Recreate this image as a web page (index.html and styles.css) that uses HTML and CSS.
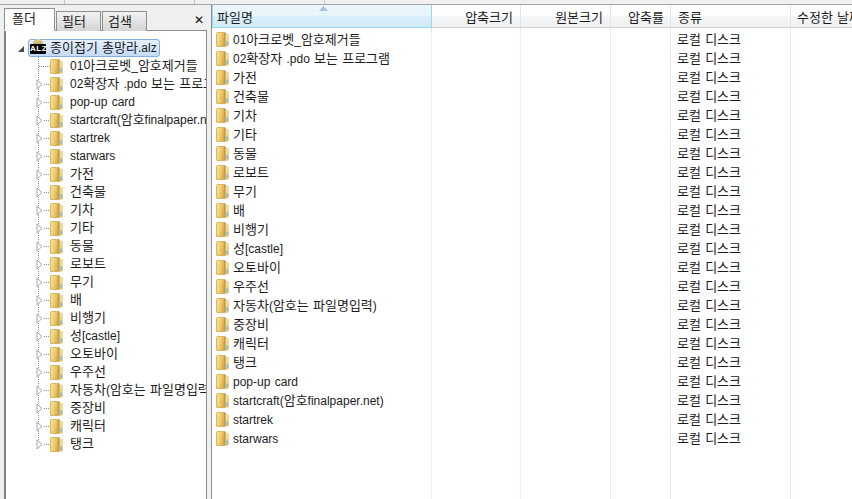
FILE: index.html
```html
<!DOCTYPE html>
<html lang="ko">
<head>
<meta charset="utf-8">
<title>ALZ</title>
<link rel="stylesheet" href="styles.css">
</head>
<body>
<svg class="defs" width="0" height="0" aria-hidden="true">
  <defs>
    <linearGradient id="ff" x1="0" y1="0" x2="1" y2="0.3"><stop offset="0" stop-color="#f8e49c"/><stop offset="0.55" stop-color="#f0cf72"/><stop offset="1" stop-color="#d9ac48"/></linearGradient>
    <linearGradient id="fr" x1="0" y1="0" x2="0" y2="1"><stop offset="0" stop-color="#f6e29c"/><stop offset="1" stop-color="#ebcc78"/></linearGradient>
    <symbol id="folder" viewBox="0 0 13 15">
      <path d="M0.5 1.5 Q0.5 0.5 1.5 0.5 L8.5 0.5 L8.5 14.5 L1 14.5 Q0.5 14.5 0.5 14 Z" fill="url(#ff)" stroke="#cfa950" stroke-width="0.8"/>
      <path d="M8.5 0.5 L9.7 0.5 L9.7 14.5 L8.5 14.5 Z" fill="#a98438"/>
      <path d="M9.7 2 L12.5 2.5 L12.5 14 L9.7 14.5 Z" fill="url(#fr)" stroke="#d6b35c" stroke-width="0.4"/>
      <path d="M10.6 9.5 h1.4 v3.5 h-1.4 Z" fill="#79b4dc"/>
    </symbol>
    <symbol id="twist" viewBox="0 0 7 11">
      <path d="M1 1 L6 5.5 L1 10 Z" fill="#fff" stroke="#a6a6a6"/>
    </symbol>
  </defs>
</svg>
<div class="topstrip"><i class="tick t1"></i><i class="tick t2"></i><i class="tick t3"></i></div>
<div class="main">
  <aside class="left">
    <div class="tabs">
      <div class="tab on">폴더</div>
      <div class="tab">필터</div>
      <div class="tab">검색</div>
      <div class="close">✕</div>
    </div>
    <div class="tree">
      <div class="root">
        <svg class="rootarrow" width="6" height="6" viewBox="0 0 6 6"><path d="M6 0 V6 H0 Z" fill="#4a4a4a"/></svg>
        <div class="sel">
          <span class="alz"><i class="bulb"></i><b class="alzt">ALZ</b></span>
          <span class="name">종이접기 총망라<span class="lat">.alz</span></span>
        </div>
      </div>
      <div class="nodes">
        <div class="node first"><span class="tw"></span><span class="dots"></span><svg class="ic"><use href="#folder"/></svg><span class="name"><span class="lat">01</span>아크로벳<span class="lat">_</span>암호제거들</span></div>
        <div class="node"><span class="tw"><svg class="arr"><use href="#twist"/></svg></span><span class="dots"></span><svg class="ic"><use href="#folder"/></svg><span class="name"><span class="lat">02</span>확장자 <span class="lat">.pdo</span> 보는 프로그램</span></div>
        <div class="node"><span class="tw"><svg class="arr"><use href="#twist"/></svg></span><span class="dots"></span><svg class="ic"><use href="#folder"/></svg><span class="name lat">pop-up card</span></div>
        <div class="node"><span class="tw"><svg class="arr"><use href="#twist"/></svg></span><span class="dots"></span><svg class="ic"><use href="#folder"/></svg><span class="name"><span class="lat">startcraft(</span>암호<span class="lat">finalpaper.net)</span></span></div>
        <div class="node"><span class="tw"><svg class="arr"><use href="#twist"/></svg></span><span class="dots"></span><svg class="ic"><use href="#folder"/></svg><span class="name lat">startrek</span></div>
        <div class="node"><span class="tw"><svg class="arr"><use href="#twist"/></svg></span><span class="dots"></span><svg class="ic"><use href="#folder"/></svg><span class="name lat">starwars</span></div>
        <div class="node"><span class="tw"><svg class="arr"><use href="#twist"/></svg></span><span class="dots"></span><svg class="ic"><use href="#folder"/></svg><span class="name">가전</span></div>
        <div class="node"><span class="tw"><svg class="arr"><use href="#twist"/></svg></span><span class="dots"></span><svg class="ic"><use href="#folder"/></svg><span class="name">건축물</span></div>
        <div class="node"><span class="tw"><svg class="arr"><use href="#twist"/></svg></span><span class="dots"></span><svg class="ic"><use href="#folder"/></svg><span class="name">기차</span></div>
        <div class="node"><span class="tw"><svg class="arr"><use href="#twist"/></svg></span><span class="dots"></span><svg class="ic"><use href="#folder"/></svg><span class="name">기타</span></div>
        <div class="node"><span class="tw"><svg class="arr"><use href="#twist"/></svg></span><span class="dots"></span><svg class="ic"><use href="#folder"/></svg><span class="name">동물</span></div>
        <div class="node"><span class="tw"><svg class="arr"><use href="#twist"/></svg></span><span class="dots"></span><svg class="ic"><use href="#folder"/></svg><span class="name">로보트</span></div>
        <div class="node"><span class="tw"><svg class="arr"><use href="#twist"/></svg></span><span class="dots"></span><svg class="ic"><use href="#folder"/></svg><span class="name">무기</span></div>
        <div class="node"><span class="tw"><svg class="arr"><use href="#twist"/></svg></span><span class="dots"></span><svg class="ic"><use href="#folder"/></svg><span class="name">배</span></div>
        <div class="node"><span class="tw"><svg class="arr"><use href="#twist"/></svg></span><span class="dots"></span><svg class="ic"><use href="#folder"/></svg><span class="name">비행기</span></div>
        <div class="node"><span class="tw"><svg class="arr"><use href="#twist"/></svg></span><span class="dots"></span><svg class="ic"><use href="#folder"/></svg><span class="name">성<span class="lat">[castle]</span></span></div>
        <div class="node"><span class="tw"><svg class="arr"><use href="#twist"/></svg></span><span class="dots"></span><svg class="ic"><use href="#folder"/></svg><span class="name">오토바이</span></div>
        <div class="node"><span class="tw"><svg class="arr"><use href="#twist"/></svg></span><span class="dots"></span><svg class="ic"><use href="#folder"/></svg><span class="name">우주선</span></div>
        <div class="node"><span class="tw"><svg class="arr"><use href="#twist"/></svg></span><span class="dots"></span><svg class="ic"><use href="#folder"/></svg><span class="name">자동차<span class="lat">(</span>암호는 파일명입력<span class="lat">)</span></span></div>
        <div class="node"><span class="tw"><svg class="arr"><use href="#twist"/></svg></span><span class="dots"></span><svg class="ic"><use href="#folder"/></svg><span class="name">중장비</span></div>
        <div class="node"><span class="tw"><svg class="arr"><use href="#twist"/></svg></span><span class="dots"></span><svg class="ic"><use href="#folder"/></svg><span class="name">캐릭터</span></div>
        <div class="node last"><span class="tw"><svg class="arr"><use href="#twist"/></svg></span><span class="dots"></span><svg class="ic"><use href="#folder"/></svg><span class="name">탱크</span></div>
      </div>
    </div>
  </aside>
  <section class="right">
    <div class="cols head">
      <div class="hc c1 active"><svg class="sort" width="9" height="5" viewBox="0 0 9 5"><path d="M4.5 0 L9 5 H0 Z" fill="#a9c4d8"/></svg>파일명</div>
      <div class="hc c2 num">압축크기</div>
      <div class="hc c3 num">원본크기</div>
      <div class="hc c4 num">압축률</div>
      <div class="hc c5">종류</div>
      <div class="hc c6">수정한 날짜</div>
    </div>
    <div class="body">
      <div class="guides"><i class="c1"></i><i class="c2"></i><i class="c3"></i><i class="c4"></i><i class="c5"></i></div>
      <div class="rows">
        <div class="row"><span class="fname"><svg class="ic"><use href="#folder"/></svg><span><span class="lat">01</span>아크로벳<span class="lat">_</span>암호제거들</span></span><span class="kind">로컬 디스크</span></div>
        <div class="row"><span class="fname"><svg class="ic"><use href="#folder"/></svg><span><span class="lat">02</span>확장자 <span class="lat">.pdo</span> 보는 프로그램</span></span><span class="kind">로컬 디스크</span></div>
        <div class="row"><span class="fname"><svg class="ic"><use href="#folder"/></svg>가전</span><span class="kind">로컬 디스크</span></div>
        <div class="row"><span class="fname"><svg class="ic"><use href="#folder"/></svg>건축물</span><span class="kind">로컬 디스크</span></div>
        <div class="row"><span class="fname"><svg class="ic"><use href="#folder"/></svg>기차</span><span class="kind">로컬 디스크</span></div>
        <div class="row"><span class="fname"><svg class="ic"><use href="#folder"/></svg>기타</span><span class="kind">로컬 디스크</span></div>
        <div class="row"><span class="fname"><svg class="ic"><use href="#folder"/></svg>동물</span><span class="kind">로컬 디스크</span></div>
        <div class="row"><span class="fname"><svg class="ic"><use href="#folder"/></svg>로보트</span><span class="kind">로컬 디스크</span></div>
        <div class="row"><span class="fname"><svg class="ic"><use href="#folder"/></svg>무기</span><span class="kind">로컬 디스크</span></div>
        <div class="row"><span class="fname"><svg class="ic"><use href="#folder"/></svg>배</span><span class="kind">로컬 디스크</span></div>
        <div class="row"><span class="fname"><svg class="ic"><use href="#folder"/></svg>비행기</span><span class="kind">로컬 디스크</span></div>
        <div class="row"><span class="fname"><svg class="ic"><use href="#folder"/></svg><span>성<span class="lat">[castle]</span></span></span><span class="kind">로컬 디스크</span></div>
        <div class="row"><span class="fname"><svg class="ic"><use href="#folder"/></svg>오토바이</span><span class="kind">로컬 디스크</span></div>
        <div class="row"><span class="fname"><svg class="ic"><use href="#folder"/></svg>우주선</span><span class="kind">로컬 디스크</span></div>
        <div class="row"><span class="fname"><svg class="ic"><use href="#folder"/></svg><span>자동차<span class="lat">(</span>암호는 파일명입력<span class="lat">)</span></span></span><span class="kind">로컬 디스크</span></div>
        <div class="row"><span class="fname"><svg class="ic"><use href="#folder"/></svg>중장비</span><span class="kind">로컬 디스크</span></div>
        <div class="row"><span class="fname"><svg class="ic"><use href="#folder"/></svg>캐릭터</span><span class="kind">로컬 디스크</span></div>
        <div class="row"><span class="fname"><svg class="ic"><use href="#folder"/></svg>탱크</span><span class="kind">로컬 디스크</span></div>
        <div class="row"><span class="fname"><svg class="ic"><use href="#folder"/></svg><span class="lat">pop-up card</span></span><span class="kind">로컬 디스크</span></div>
        <div class="row"><span class="fname"><svg class="ic"><use href="#folder"/></svg><span><span class="lat">startcraft(</span>암호<span class="lat">finalpaper.net)</span></span></span><span class="kind">로컬 디스크</span></div>
        <div class="row"><span class="fname"><svg class="ic"><use href="#folder"/></svg><span class="lat">startrek</span></span><span class="kind">로컬 디스크</span></div>
        <div class="row"><span class="fname"><svg class="ic"><use href="#folder"/></svg><span class="lat">starwars</span></span><span class="kind">로컬 디스크</span></div>
      </div>
    </div>
  </section>
</div>
</body>
</html>
```
FILE: styles.css
```css
* { box-sizing: border-box; }
html, body { margin: 0; padding: 0; width: 852px; height: 499px; overflow: hidden; }
body {
  display: flex; flex-direction: column;
  background: #f0f0f0;
  font-family: Roboto, "Noto Sans CJK KR", sans-serif;
  font-size: 13px;
  line-height: 18px;
  word-spacing: 1px;
  color: #1c1c1c;
}
.lat { font-family: "Liberation Sans", sans-serif; font-size: 12px; }
.defs { position: absolute; }

.topstrip { height: 5px; flex: none; position: relative; background: #f0f0f0; border-bottom: 1px solid #a5a5ae; }
.tick { position: absolute; top: 0; width: 1px; height: 4px; background: #c4c4c4; }
.t1 { left: 64px; } .t2 { left: 194px; } .t3 { left: 324px; }

.main { flex: 1; display: flex; min-height: 0; }

/* left pane */
.left { width: 207px; flex: none; padding: 3px 0 0 4px; display: flex; flex-direction: column; }
.tabs { display: flex; height: 23px; flex: none; align-items: flex-end; position: relative; z-index: 1; margin-bottom: -1px; }
.tab {
  width: 45px; height: 20px; margin-left: 1px; padding-left: 5px;
  border: 1px solid #8e8f8f; border-bottom: none;
  background: linear-gradient(#f2f2f2, #d4d4d4);
  line-height: 20px;
}
.tab.on { width: 51px; height: 23px; margin-left: 0; padding-left: 7px; background: #fff; border-bottom: 1px solid #fff; line-height: 20px; }
.close { margin-left: auto; margin-right: 3px; align-self: center; font-size: 12px; font-weight: 700; font-family: "DejaVu Sans", sans-serif; color: #111; }

.tree { flex: 1; background: #fff; border: 1px solid #8e8f8f; border-left: 2px solid #7f7f7f; border-bottom: none; padding-top: 8px; overflow: hidden; }
.root { display: flex; align-items: center; height: 18px; margin-left: 12px; }
.rootarrow { margin-right: 4px; margin-top: 2px; flex: none; }
.sel {
  display: flex; align-items: center; height: 18px; width: 132px; padding-left: 1px; white-space: nowrap;
  border: 1px solid #84acdd; border-radius: 3px;
  background: linear-gradient(#e6f0fb, #c5dbf6);
}
.alz { width: 16px; height: 16px; flex: none; margin-right: 4px; position: relative; display: block; }
.bulb { position: absolute; left: 3px; top: -1px; width: 10px; height: 9px; border-radius: 5px 5px 0 0; background: linear-gradient(#e9d596, #a98a34); }
.alzt {
  position: absolute; left: 0; top: 4px; width: 16px; height: 10px; background: #000; color: #fff; border-radius: 1px;
  font: 700 8px/10px "Liberation Sans", sans-serif; text-align: center; letter-spacing: 0.5px;
}
.nodes { padding-left: 30px; }
.node { display: flex; align-items: center; height: 18px; white-space: nowrap; }
.tw {
  width: 7px; height: 18px; flex: none; display: flex; align-items: center;
  background: repeating-linear-gradient(to bottom, #8f8f8f 0 1px, transparent 1px 2px) 2px 0 / 1px 100% no-repeat;
}
.node.last .tw { background-size: 1px 50%; }
.arr { width: 7px; height: 11px; display: block; }
.dots {
  width: 6px; height: 1px; flex: none; margin-left: 1px;
  background: repeating-linear-gradient(to right, #8f8f8f 0 1px, transparent 1px 2px);
}
.node.first .tw { width: 3px; }
.node.first .dots { width: 11px; margin-left: 0; }
.ic { width: 13px; height: 15px; flex: none; display: block; }
.node .name { margin-left: 7px; }

/* right pane */
.right { flex: 1; min-width: 0; margin-left: 4px; background: #fff; border-left: 1px solid #8e8f8f; display: flex; flex-direction: column; }
.cols { display: flex; }
.head { height: 23px; flex: none; border-bottom: 1px solid #d5d5d5; background: linear-gradient(#fff 0 45%, #f3f4f6 55%, #f0f1f3); }
.hc { height: 22px; line-height: 25px; padding: 0 7px; border-right: 1px solid #e3e5e8; white-space: nowrap; position: relative; flex: none; }
.hc.num { text-align: right; }
.hc.c1 { width: 220px; padding-left: 4px; }
.hc.c2 { width: 89px; }
.hc.c3 { width: 90px; }
.hc.c4 { width: 60px; padding-right: 6px; }
.hc.c5 { width: 120px; }
.hc.c6 { flex: 1; border-right: none; padding-left: 6px; overflow: hidden; }
.hc.active { background: linear-gradient(#e8f6fc 0 45%, #d8eefa 55%, #d0e9f7); border: 1px solid #9bd6f0; border-top: none; height: 23px; }
.sort { position: absolute; left: 106px; top: 1px; }

.body { flex: 1; position: relative; min-height: 0; }
.guides { position: absolute; inset: 0; display: flex; pointer-events: none; }
.guides i { display: block; height: 100%; border-right: 1px solid #e6edf8; flex: none; }
.guides .c1 { width: 220px; }
.guides .c2 { width: 89px; }
.guides .c3 { width: 90px; }
.guides .c4 { width: 60px; }
.guides .c5 { width: 120px; }
.rows { position: relative; padding-top: 2px; }
.row { height: 19px; display: flex; align-items: center; white-space: nowrap; }
.fname { width: 459px; flex: none; display: flex; align-items: center; padding-left: 4px; }
.fname .ic { margin-right: 4px; }
.kind { padding-left: 6px; }
```
